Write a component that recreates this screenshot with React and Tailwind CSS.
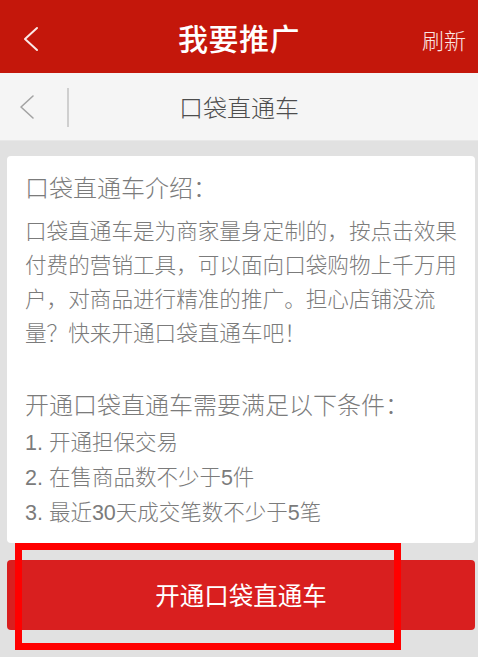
export default function App() {
  const font = { fontFamily: '"Noto Sans CJK SC", "Noto Sans", sans-serif' };
  return (
    <div className="relative w-[478px] h-[657px] overflow-hidden bg-[#e1e1e1]" style={font}>
      {/* Top header */}
      <div className="relative flex items-center justify-center h-[73px] bg-[#c4170b]">
        <svg className="absolute left-[22px] top-[26px]" width="18" height="26" viewBox="0 0 18 26" fill="none">
          <path d="M15 2 L3 13 L15 24" stroke="#fbe9e7" strokeWidth="2" strokeLinecap="round" strokeLinejoin="round" />
        </svg>
        <span className="text-[30px] leading-none font-medium text-white tracking-[0.5px]">我要推广</span>
        <span className="absolute right-[12px] top-[26px] text-[22px] leading-[26px] font-light text-[#fbe4e2]">刷新</span>
      </div>
      {/* Sub bar */}
      <div className="relative flex items-center justify-center h-[68px] bg-[#f5f5f5] border-b border-[#e8e8e8]">
        <svg className="absolute left-[18px] top-[21px]" width="18" height="26" viewBox="0 0 18 26" fill="none">
          <path d="M15 2 L3 13 L15 24" stroke="#a3a3a3" strokeWidth="1.6" strokeLinecap="round" strokeLinejoin="round" />
        </svg>
        <div className="absolute left-[67px] top-[15px] w-[1.5px] h-[39px] bg-[#cfcfcf]" />
        <span className="text-[24px] leading-none font-light text-[#4d4d4d]">口袋直通车</span>
      </div>
      {/* Content */}
      <div className="pl-[7px] pr-[3px] pt-[15px]">
        <div className="bg-white rounded-[4px] pl-[18px] pr-[12px] pt-[11px] pb-[12px] font-light text-[#7b7b7b]">
          <div className="text-[24px] leading-[40px]">口袋直通车介绍：</div>
          <div className="mt-[6px] text-[21.6px] leading-[34px] whitespace-nowrap">
            口袋直通车是为商家量身定制的，按点击效果<br />
            付费的营销工具，可以面向口袋购物上千万用<br />
            户，对商品进行精准的推广。担心店铺没流<br />
            量？快来开通口袋直通车吧！
          </div>
          <div className="mt-[35px] text-[24px] leading-[40px] whitespace-nowrap">开通口袋直通车需要满足以下条件：</div>
          <div
            className="mt-[2px] text-[21.5px] leading-[35px] whitespace-nowrap"
            style={{ fontFamily: '"Liberation Sans", "Noto Sans CJK SC", sans-serif' }}
          >
            <div>1. 开通担保交易</div>
            <div>2. 在售商品数不少于5件</div>
            <div>3. 最近30天成交笔数不少于5笔</div>
          </div>
        </div>
        <div className="mt-[17px] flex items-center justify-center h-[70px] rounded-[4px] bg-[#d91f1f]">
          <span className="text-[24.5px] leading-none text-white">开通口袋直通车</span>
        </div>
      </div>
      {/* Annotation outline */}
      <div className="absolute left-[15px] top-[543px] w-[386px] h-[107px] border-[7px] border-[#ff0000] pointer-events-none" />
    </div>
  );
}
